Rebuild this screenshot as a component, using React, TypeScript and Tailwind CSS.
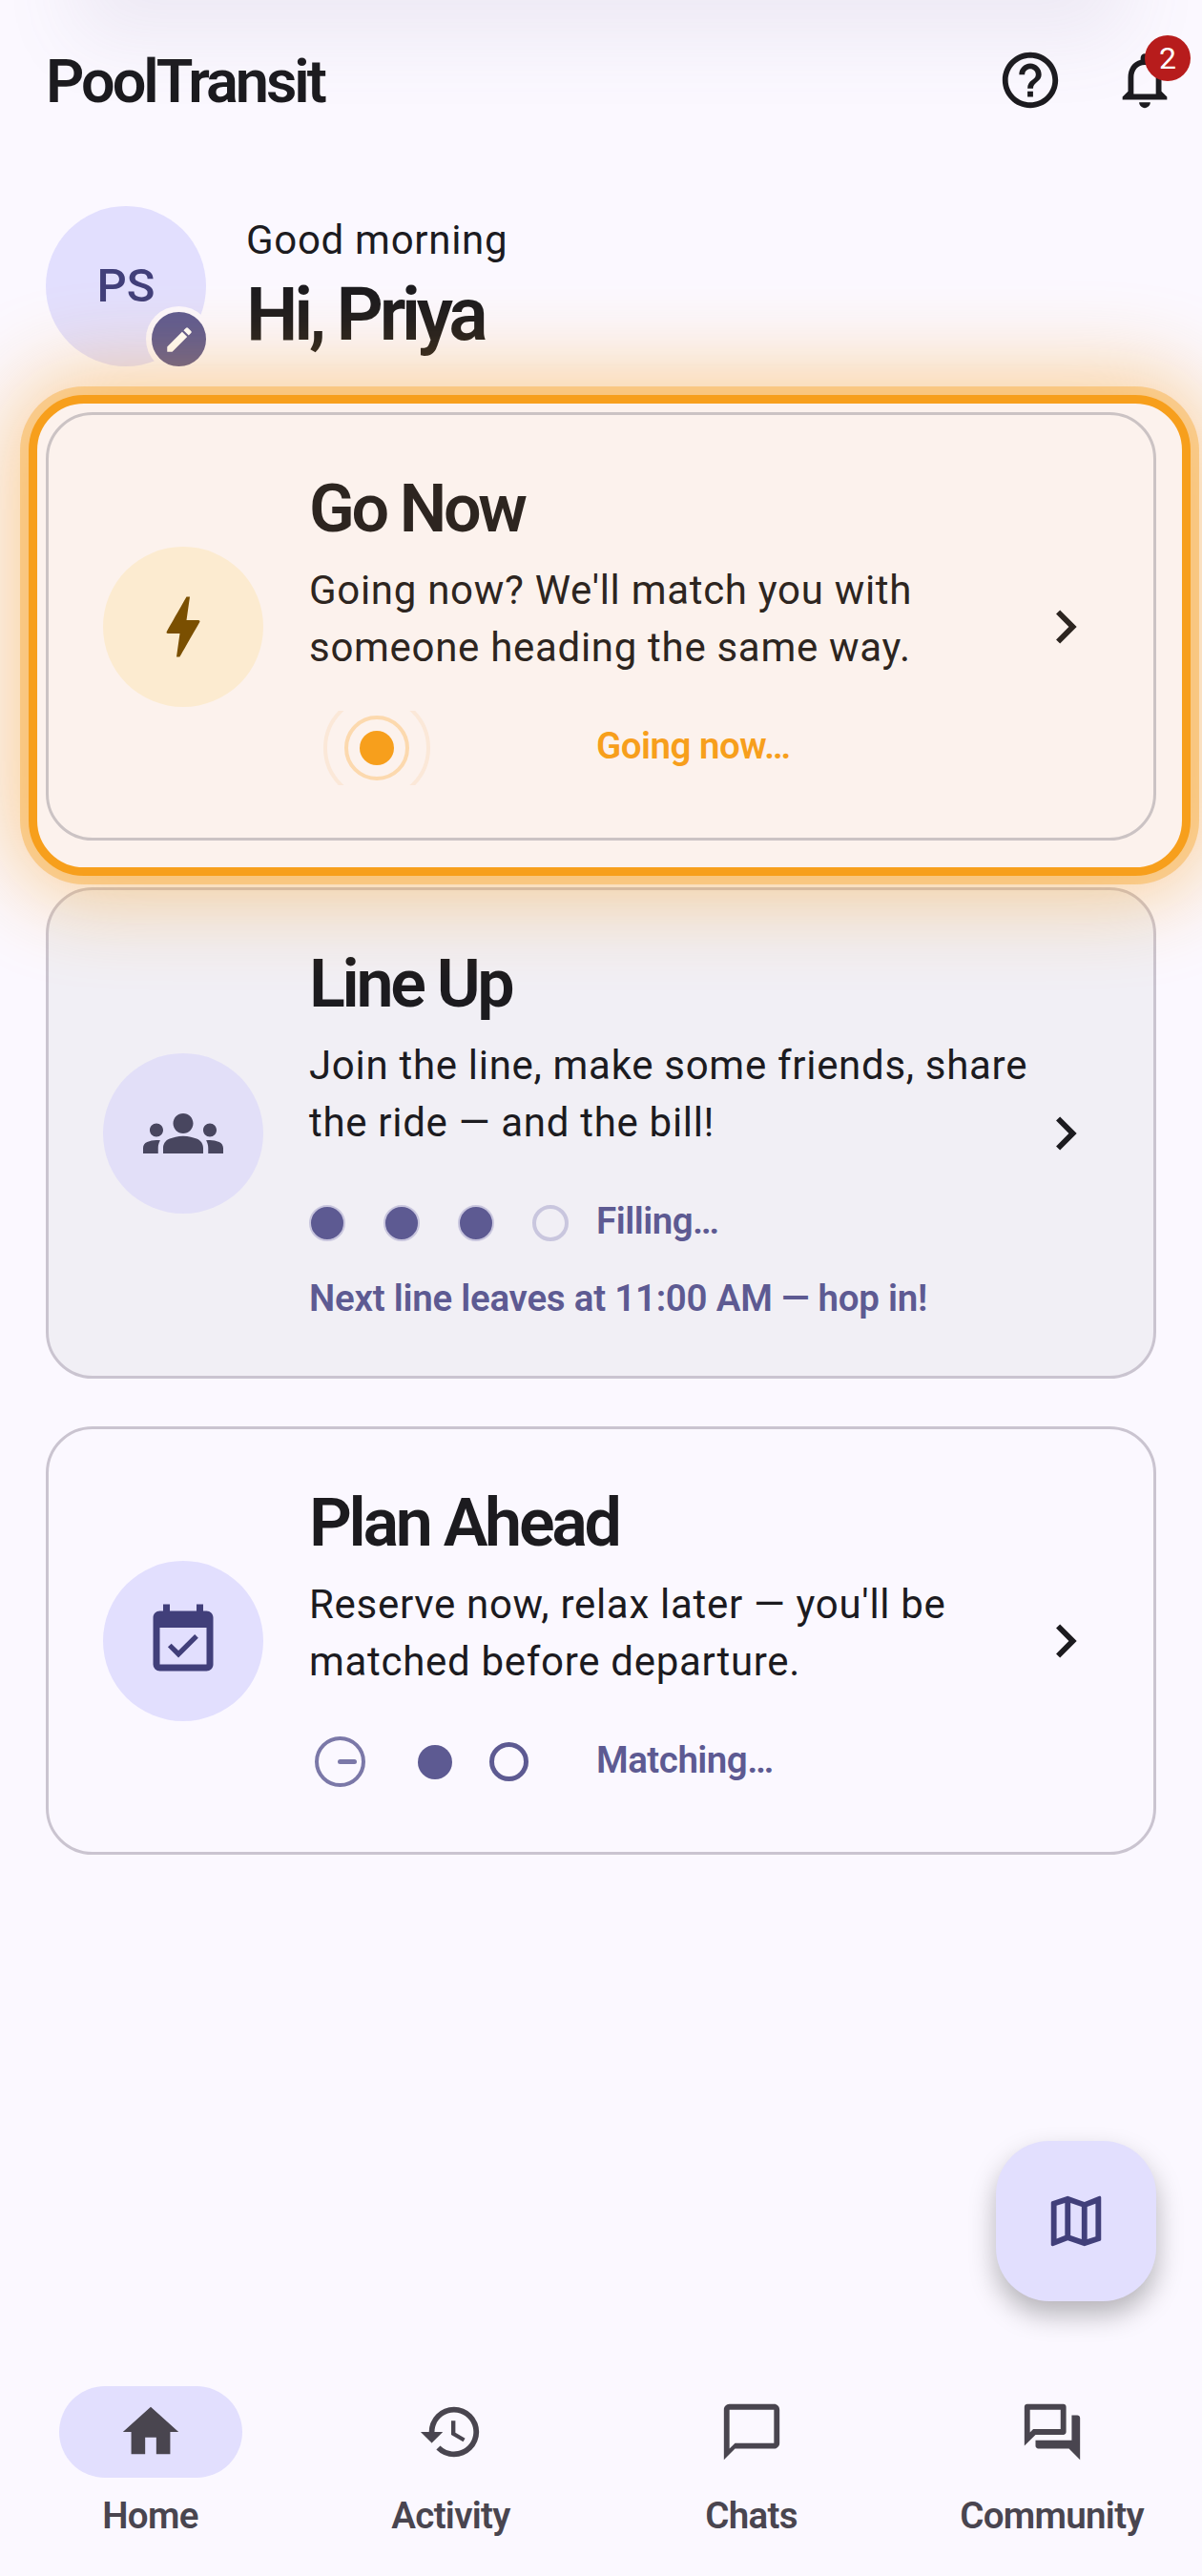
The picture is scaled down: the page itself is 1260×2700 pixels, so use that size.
import type { ReactNode } from "react";
import {
  MdBolt,
  MdChatBubbleOutline,
  MdChevronRight,
  MdEdit,
  MdEventAvailable,
  MdGroups,
  MdHelpOutline,
  MdHistory,
  MdHome,
  MdNotificationsNone,
  MdOutlineForum,
  MdOutlineMap,
} from "react-icons/md";

type RideCardProps = {
  title: string;
  body: string;
  icon: ReactNode;
  circle: string;
  surface: string;
  ink: string;
  children: ReactNode;
};

function RideCard({ title, body, icon, circle, surface, ink, children }: RideCardProps) {
  return (
    <div className={`flex items-center rounded-[49px] border-[3px] px-[57px] py-[56px] ${surface} ${ink}`}>
      <div className={`mr-[48px] flex h-[168px] w-[168px] shrink-0 items-center justify-center rounded-full ${circle}`}>
        {icon}
      </div>
      <div className="min-w-0 flex-1">
        <h2 className="text-[70px] leading-[84px] font-semibold tracking-[-3.3px]">{title}</h2>
        <p className="mt-[14px] text-[42px] leading-[60px] tracking-[0.7px]">{body}</p>
        {children}
      </div>
      <MdChevronRight className="shrink-0" size={70} />
    </div>
  );
}

function StatusRow({ label, tone, children }: { label: string; tone: string; children: ReactNode }) {
  return (
    <div className="mt-[36px] flex h-[77px] items-center">
      <div className="flex w-[301px] items-center">{children}</div>
      <span className={`mb-[3px] text-[38.5px] font-semibold tracking-[-0.5px] ${tone}`}>{label}</span>
    </div>
  );
}

function NavItem({ label, active, children }: { label: string; active?: boolean; children: ReactNode }) {
  return (
    <div className="flex flex-col items-center">
      <div className={`flex h-[96px] w-[192px] items-center justify-center rounded-full ${active ? "bg-[#e2dffe]" : ""}`}>
        {children}
      </div>
      <span className="mt-[12px] text-[38.5px] leading-[56px] font-semibold tracking-[-0.7px]">{label}</span>
    </div>
  );
}

export default function App() {
  return (
    <div className="relative flex h-[2700px] w-[1260px] flex-col overflow-hidden bg-[#fbf8ff] font-['Roboto',sans-serif] text-[#1c1b1f]">
      {/* soft shade falling from the status bar */}
      <div className="absolute -top-[40px] right-[120px] left-[120px] h-[40px] shadow-[0_0_80px_40px_rgba(120,110,150,0.1)]" />

      <header className="flex h-[168px] items-center justify-between pr-[25px] pl-[48px]">
        <h1 className="mt-[5px] text-[63px] font-semibold tracking-[-3px]">PoolTransit</h1>
        <div className="flex items-center gap-[50px]">
          <MdHelpOutline size={70} />
          <div className="relative">
            <MdNotificationsNone size={70} />
            <span className="absolute -top-[12px] left-[35px] flex h-[48px] w-[48px] items-center justify-center rounded-full bg-[#b71c1c] text-[32px] text-white">
              2
            </span>
          </div>
        </div>
      </header>

      <section className="mt-[48px] flex items-center gap-[42px] pl-[48px]">
        <div className="relative flex h-[168px] w-[168px] items-center justify-center rounded-full bg-[#e2dffe] text-[49px] font-medium text-[#413f7a]">
          PS
          <span className="absolute -right-[6px] -bottom-[6px] flex h-[69px] w-[69px] items-center justify-center rounded-full border-[6px] border-[#fbf8ff] bg-[#5d5a92] text-white">
            <MdEdit size={34} />
          </span>
        </div>
        <div>
          <p className="text-[42px] leading-[56px] tracking-[0.7px]">Good morning</p>
          <p className="mt-[4px] text-[77px] leading-[92px] font-semibold tracking-[-4.3px]">Hi, Priya</p>
        </div>
      </section>

      <main className="flex flex-col">
        <div className="relative z-10 mt-[30px] mr-[12px] ml-[30px] rounded-[58px] border-[9px] border-[#f79f1c] bg-[#fcf2ed] pt-[9px] pr-[27px] pb-[28px] pl-[9px] shadow-[0_0_0_9px_rgba(248,160,29,0.37),0_0_90px_20px_rgba(248,160,29,0.48)]">
          <RideCard
            title="Go Now"
            body="Going now? We'll match you with someone heading the same way."
            icon={<MdBolt size={84} className="text-[#7a4f01]" />}
            circle="bg-[#fcebd0]"
            surface="border-[#cbc3c4] bg-[#fcf2ed]"
            ink="text-[#2d2520]"
          >
            <StatusRow label="Going now…" tone="text-[#f79f1c]">
              <svg className="ml-[15px]" width="112" height="78" viewBox="0 0 112 78">
                <circle cx="56" cy="39" r="54" fill="none" stroke="#fbe8d8" strokeWidth="4" />
                <circle cx="56" cy="39" r="32" fill="none" stroke="#fcd9ae" strokeWidth="4" />
                <circle cx="56" cy="39" r="18" fill="#f79f1c" />
              </svg>
            </StatusRow>
          </RideCard>
        </div>

        <div className="mx-[48px] mt-[12px]">
          <RideCard
            title="Line Up"
            body="Join the line, make some friends, share the ride — and the bill!"
            icon={<MdGroups size={84} className="text-[#48465f]" />}
            circle="bg-[#e2dff8]"
            surface="border-[#cac4d0] bg-[#f1eff5]"
            ink="text-[#1c1b1f]"
          >
            <StatusRow label="Filling…" tone="text-[#5d5a92]">
              <div className="flex items-center gap-[40px]">
                <span className="h-[38px] w-[38px] rounded-full border-[2px] border-[#c9c6de] bg-[#5d5a92]" />
                <span className="h-[38px] w-[38px] rounded-full border-[2px] border-[#c9c6de] bg-[#5d5a92]" />
                <span className="h-[38px] w-[38px] rounded-full border-[2px] border-[#c9c6de] bg-[#5d5a92]" />
                <span className="h-[38px] w-[38px] rounded-full border-[4px] border-[#c9c6de]" />
              </div>
            </StatusRow>
            <p className="mt-[16px] text-[38.5px] leading-[50px] font-semibold tracking-[-0.25px] text-[#5d5a92]">
              Next line leaves at 11:00 AM — hop in!
            </p>
          </RideCard>
        </div>

        <div className="mx-[48px] mt-[50px]">
          <RideCard
            title="Plan Ahead"
            body="Reserve now, relax later — you'll be matched before departure."
            icon={<MdEventAvailable size={84} className="text-[#413f7a]" />}
            circle="bg-[#e2dffe]"
            surface="border-[#cac4d0] bg-[#fbf8ff]"
            ink="text-[#1c1b1f]"
          >
            <StatusRow label="Matching…" tone="text-[#5d5a92]">
              <span className="ml-[6px] flex h-[53px] w-[53px] items-center justify-end rounded-full border-[4px] border-[#7b78a8]">
                <span className="mr-[5px] h-[5px] w-[20px] rounded-full bg-[#7b78a8]" />
              </span>
              <span className="ml-[55px] h-[36px] w-[36px] rounded-full bg-[#5d5a92]" />
              <span className="ml-[39px] h-[41px] w-[41px] rounded-full border-[5px] border-[#5d5a92]" />
            </StatusRow>
          </RideCard>
        </div>
      </main>

      <button type="button" className="absolute top-[2244px] left-[1044px] flex h-[168px] w-[168px] items-center justify-center rounded-[56px] bg-[#e2dffe] text-[#413f7a] shadow-[0_14px_28px_rgba(0,0,0,0.28)]">
        <MdOutlineMap size={70} />
      </button>

      <nav className="mt-auto mb-[35px] grid grid-cols-4 text-[#49454f]">
        <NavItem label="Home" active>
          <MdHome size={70} />
        </NavItem>
        <NavItem label="Activity">
          <MdHistory size={70} />
        </NavItem>
        <NavItem label="Chats">
          <MdChatBubbleOutline size={70} />
        </NavItem>
        <NavItem label="Community">
          <MdOutlineForum size={70} />
        </NavItem>
      </nav>
    </div>
  );
}
